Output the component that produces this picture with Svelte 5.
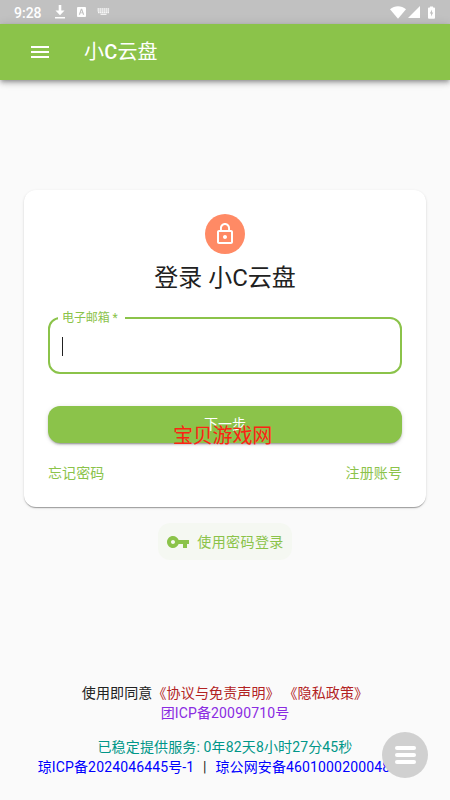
<script lang="ts">
	const siteName = '小C云盘';
	const uptime = '0年82天8小时27分45秒';

	const agreements = ['《协议与免责声明》', '《隐私政策》'];

	let email = $state('');
</script>

<div class="screen">
	<div class="status-bar">
		<span class="clock">9:28</span>
		<svg class="download" viewBox="0 0 10 14">
			<path d="M3.700 0h2.600v5.500h3.200L5 10.200.5 5.500h3.200zM0 12h10v1.500H0z" />
		</svg>
		<svg class="lang" viewBox="0 0 10 11">
			<path
				fill-rule="evenodd"
				d="M1 0h8a1 1 0 0 1 1 1v9a1 1 0 0 1-1 1H1a1 1 0 0 1-1-1V1a1 1 0 0 1 1-1zm3.300 2L2 8.500h1.400L3.800 7h2.400l.4 1.500H8L5.700 2zM5 3.600L5.800 6H4.200z"
			/>
		</svg>
		<svg class="keyboard" viewBox="0 0 13 8">
			<path d="M.5 1h12M.5 2.800h12M1 4.500h11" stroke-width="1.300" stroke-dasharray="1.600 .4" />
			<path d="M3.500 6.300h6" stroke-width="1.200" />
		</svg>
		<span class="fill"></span>
		<svg class="wifi" viewBox="0 0 16 13">
			<path d="M0 3.200C4.600-.8 11.400-.8 16 3.200L8 12.800z" />
		</svg>
		<svg class="signal" viewBox="0 0 12 12"><path d="M12 0v12H0z" /></svg>
		<svg class="battery" viewBox="0 0 8 14">
			<path
				fill-rule="evenodd"
				d="M2.300 0h3.400v1.400H7a1 1 0 0 1 1 1V13a1 1 0 0 1-1 1H1a1 1 0 0 1-1-1V2.400a1 1 0 0 1 1-1h1.300zM4.600 3.700L2 8.200h1.500v3.500L6 7H4.600z"
			/>
		</svg>
	</div>

	<header class="app-bar">
		<button class="menu" aria-label="menu">
			<svg viewBox="0 0 24 24"><path d="M3 18h18v-2H3v2zm0-5h18v-2H3v2zm0-7v2h18V6H3z" /></svg>
		</button>
		<span class="title">小<b>C</b>云盘</span>
	</header>

	<main>
		<form class="card">
			<div class="avatar">
				<svg viewBox="0 0 24 24">
					<path
						d="M12 17c1.100 0 2-.9 2-2s-.9-2-2-2-2 .9-2 2 .9 2 2 2zm6-9h-1V6c0-2.760-2.240-5-5-5S7 3.240 7 6v2H6c-1.100 0-2 .9-2 2v10c0 1.100.9 2 2 2h12c1.100 0 2-.9 2-2V10c0-1.100-.9-2-2-2zM8.900 6c0-1.710 1.390-3.100 3.100-3.100s3.100 1.390 3.100 3.100v2H8.900V6zM18 20H6V10h12v10z"
					/>
				</svg>
			</div>
			<h1>登录 {siteName}</h1>

			<fieldset class="field">
				<legend>电子邮箱 *</legend>
				<div class="input">
					<span>{email}</span>
					<span class="caret"></span>
				</div>
			</fieldset>

			<button class="next" type="button">
				<span>下一步</span>
				<span class="stamp">宝贝游戏网</span>
			</button>

			<div class="links">
				<span>忘记密码</span>
				<span>注册账号</span>
			</div>
		</form>

		<button class="password-login">
			<svg viewBox="0 0 24 24">
				<path
					d="M12.650 10C11.830 7.670 9.610 6 7 6c-3.310 0-6 2.690-6 6s2.690 6 6 6c2.610 0 4.830-1.670 5.650-4H17v4h4v-4h2v-4H12.650zM7 14c-1.100 0-2-.9-2-2s.9-2 2-2 2 .9 2 2-.9 2-2 2z"
				/>
			</svg>
			<span>使用密码登录</span>
		</button>
	</main>

	<footer>
		<div class="terms">
			使用即同意{#each agreements as name, i (name)}{i > 0 ? ' ' : ''}<span class="agreement">{name}</span>{/each}
		</div>
		<div class="group-icp">团ICP备20090710号</div>
		<div class="uptime">已稳定提供服务: {uptime}</div>
		<div class="icp">
			<span>琼ICP备2024046445号-1</span>
			<i>|</i>
			<span>琼公网安备4601000200048号</span>
		</div>
	</footer>

	<button class="fab" aria-label="more"><i></i><i></i><i></i></button>
</div>

<style>
	:global(body) {
		background: #fafafa;
	}

	.screen {
		position: relative;
		display: flex;
		flex-direction: column;
		width: 450px;
		height: 800px;
		overflow: hidden;
		background: #fafafa;
		color: #212121;
		font-family: Roboto, 'Noto Sans CJK SC', sans-serif;
		font-size: 14px;
	}

	button {
		border: 0;
		padding: 0;
		background: none;
		font: inherit;
	}

	svg {
		display: block;
		fill: currentColor;
		flex-shrink: 0;
	}

	.status-bar {
		display: flex;
		align-items: center;
		height: 24px;
		box-sizing: border-box;
		padding: 0 15px 0 14px;
		background: #c1c1c1;
		color: #fff;
	}

	.clock {
		width: 41px;
		padding-top: 1px;
		font-size: 14px;
		font-weight: 500;
	}

	.download { width: 10px; height: 14px; }
	.lang { width: 9px; height: 10px; margin-left: 12px; }
	.keyboard { width: 13px; height: 8px; margin-left: 11px; fill: none; stroke: currentColor; opacity: 0.85; }
	.fill { flex: 1; }
	.wifi { width: 16px; height: 13px; }
	.signal { width: 12px; height: 12px; margin-left: 2px; }
	.battery { width: 7px; height: 13px; margin-left: 8px; }

	.app-bar {
		display: flex;
		align-items: center;
		height: 56px;
		flex-shrink: 0;
		background: #8bc34a;
		color: #fff;
		box-shadow: 0 2px 4px -1px rgba(0, 0, 0, 0.3), 0 4px 5px rgba(0, 0, 0, 0.14), 0 1px 10px rgba(0, 0, 0, 0.12);
	}

	.menu {
		margin-left: 28px;
		color: inherit;
	}

	.menu svg {
		width: 24px;
		height: 24px;
	}

	.title {
		margin-left: 32px;
		font-size: 20px;
		line-height: 32px;
		letter-spacing: 0.15px;
	}

	.title b {
		font-weight: 500;
	}

	main {
		display: flex;
		flex-direction: column;
		align-items: center;
		padding-top: 110px;
	}

	.card {
		display: flex;
		flex-direction: column;
		width: 402px;
		height: 317px;
		box-sizing: border-box;
		padding: 24px;
		border-radius: 12px;
		background: #fff;
		box-shadow: 0 2px 1px -1px rgba(0, 0, 0, 0.2), 0 1px 1px rgba(0, 0, 0, 0.14), 0 1px 3px rgba(0, 0, 0, 0.12);
	}

	.avatar {
		display: grid;
		place-items: center;
		align-self: center;
		width: 40px;
		height: 40px;
		border-radius: 50%;
		background: #ff8a65;
		color: #fff;
	}

	.avatar svg {
		width: 24px;
		height: 24px;
	}

	h1 {
		margin: 8px 0 0;
		font-size: 24px;
		font-weight: 400;
		line-height: 32px;
		text-align: center;
	}

	.field {
		height: 63px;
		box-sizing: border-box;
		margin: 17px 0 0;
		padding: 0 12px;
		border: 2px solid #8bc34a;
		border-radius: 12px;
	}

	legend {
		margin-left: -4px;
		padding: 0 7px 0 4px;
		color: #8bc34a;
		font-size: 12px;
		line-height: 14px;
		letter-spacing: -0.1px;
	}

	.input {
		display: flex;
		align-items: center;
		height: 43px;
	}

	.caret {
		width: 1px;
		height: 19px;
		background: #212121;
	}

	.next {
		display: flex;
		flex-direction: column;
		align-items: center;
		position: relative;
		height: 37px;
		flex-shrink: 0;
		margin-top: 32px;
		border-radius: 12px;
		background: #8bc34a;
		color: #fff;
		line-height: 36px;
		box-shadow: 0 3px 1px -2px rgba(0, 0, 0, 0.2), 0 2px 2px rgba(0, 0, 0, 0.14), 0 1px 5px rgba(0, 0, 0, 0.12);
	}

	.stamp {
		position: absolute;
		top: 15px;
		left: 125px;
		color: #fb2414;
		font-size: 20px;
		line-height: 30px;
		letter-spacing: -0.2px;
		white-space: nowrap;
	}

	.links {
		display: flex;
		justify-content: space-between;
		margin-top: 20px;
		color: #8bc34a;
		line-height: 20px;
		letter-spacing: 0.1px;
	}

	.password-login {
		display: flex;
		align-items: center;
		height: 37px;
		margin-top: 16px;
		padding: 0 8px;
		border-radius: 12px;
		background: #f5f8f2;
		color: #8bc34a;
		letter-spacing: 0.4px;
	}

	.password-login span {
		padding-bottom: 2px;
	}

	.password-login svg {
		width: 24px;
		height: 24px;
		margin-right: 7px;
	}

	footer {
		display: flex;
		flex-direction: column;
		align-items: center;
		margin-top: 123px;
		line-height: 20px;
		letter-spacing: 0.14px;
		white-space: nowrap;
	}

	.agreement { color: #b22222; }
	.group-icp { color: #8a2be2; }

	.uptime {
		margin-top: 14px;
		color: #009688;
	}

	.icp {
		display: flex;
		padding-right: 8px;
		color: #00f;
	}

	.icp i {
		width: 21px;
		color: #212121;
		font-style: normal;
		text-align: center;
	}

	.fab {
		position: absolute;
		top: 732px;
		left: 382px;
		display: flex;
		flex-direction: column;
		align-items: center;
		justify-content: center;
		gap: 3px;
		width: 46px;
		height: 46px;
		border-radius: 50%;
		background: #d0d0d0;
	}

	.fab i {
		width: 21px;
		height: 4px;
		border-radius: 2px;
		background: #fff;
	}
</style>
